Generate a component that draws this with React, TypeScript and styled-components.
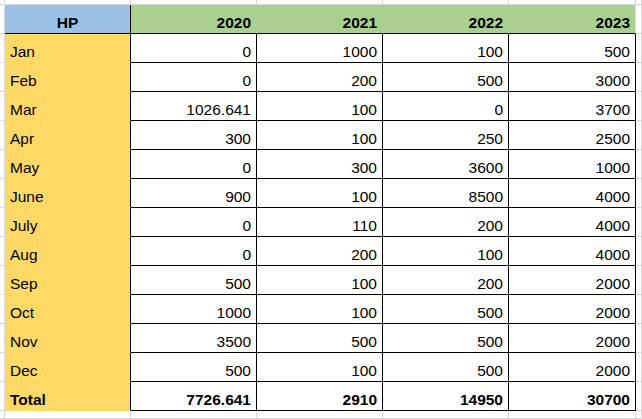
import { FC } from "react";
import styled, { createGlobalStyle, css } from "styled-components";

const GlobalStyle = createGlobalStyle`
  html, body {
    margin: 0;
    padding: 0;
    background: #ffffff;
  }
  body {
    font-family: "Liberation Sans", Arial, sans-serif;
    color: #000000;
  }
`;

const GRID_LINE = "#d9d9d9";

const Sheet = styled.div`
  display: grid;
  grid-template-columns: 5px 126px 126px 126px 126px 127px 6px;
  grid-template-rows: 5px repeat(14, 29px) 8px;
  width: 642px;
  height: 419px;
  overflow: hidden;
  font-size: 15.5px;
`;

const Cell = styled.div`
  box-sizing: border-box;
  border-right: 1px solid ${GRID_LINE};
  border-bottom: 1px solid ${GRID_LINE};
  padding: 9px 5px 0;
  line-height: 17px;
  white-space: nowrap;
  overflow: hidden;
`;

const EmptyCell = styled(Cell)`
  padding: 0;
`;

const HeaderCell = styled(Cell)<{ $label?: boolean }>`
  font-weight: bold;
  border-bottom-color: #000;
  ${({ $label }) =>
    $label
      ? css`
          background: #9bc2e6;
          text-align: center;
          border-right-color: #000;
        `
      : css`
          background: #a9d08e;
          text-align: right;
          border-right-color: #a9d08e;
        `}
  &:nth-child(7n - 1) {
    border-right-color: ${GRID_LINE};
  }
`;

const LabelCell = styled(Cell)<{ $bold?: boolean }>`
  background: #ffd966;
  border-bottom-color: #ffd966;
  border-right-color: #000;
  font-weight: ${({ $bold }) => ($bold ? "bold" : "normal")};
`;

const ValueCell = styled(Cell)<{ $bold?: boolean }>`
  text-align: right;
  border-right-color: #000;
  border-bottom-color: #000;
  font-weight: ${({ $bold }) => ($bold ? "bold" : "normal")};
`;

const years = ["2020", "2021", "2022", "2023"];

const rows: [string, (string | number)[]][] = [
  ["Jan", [0, 1000, 100, 500]],
  ["Feb", [0, 200, 500, 3000]],
  ["Mar", ["1026.641", 100, 0, 3700]],
  ["Apr", [300, 100, 250, 2500]],
  ["May", [0, 300, 3600, 1000]],
  ["June", [900, 100, 8500, 4000]],
  ["July", [0, 110, 200, 4000]],
  ["Aug", [0, 200, 100, 4000]],
  ["Sep", [500, 100, 200, 2000]],
  ["Oct", [1000, 100, 500, 2000]],
  ["Nov", [3500, 500, 500, 2000]],
  ["Dec", [500, 100, 500, 2000]],
];

const totals = ["7726.641", "2910", "14950", "30700"];

const EmptyRow: FC<{ prefix: string }> = ({ prefix }) => (
  <>
    {Array.from({ length: 7 }, (_, i) => (
      <EmptyCell key={`${prefix}-${i}`} />
    ))}
  </>
);

const App: FC = () => (
  <>
    <GlobalStyle />
    <Sheet>
      <EmptyRow prefix="top" />

      <EmptyCell />
      <HeaderCell $label>HP</HeaderCell>
      {years.map((y) => (
        <HeaderCell key={y}>{y}</HeaderCell>
      ))}
      <EmptyCell />

      {rows.map(([month, values]) => (
        <Row key={month} label={month} values={values} />
      ))}

      <Row label="Total" values={totals} bold />

      <EmptyRow prefix="bottom" />
    </Sheet>
  </>
);

const Row: FC<{ label: string; values: (string | number)[]; bold?: boolean }> = ({
  label,
  values,
  bold,
}) => (
  <>
    <EmptyCell />
    <LabelCell $bold={bold}>{label}</LabelCell>
    {values.map((v, i) => (
      <ValueCell key={i} $bold={bold}>
        {v}
      </ValueCell>
    ))}
    <EmptyCell />
  </>
);

export default App;
